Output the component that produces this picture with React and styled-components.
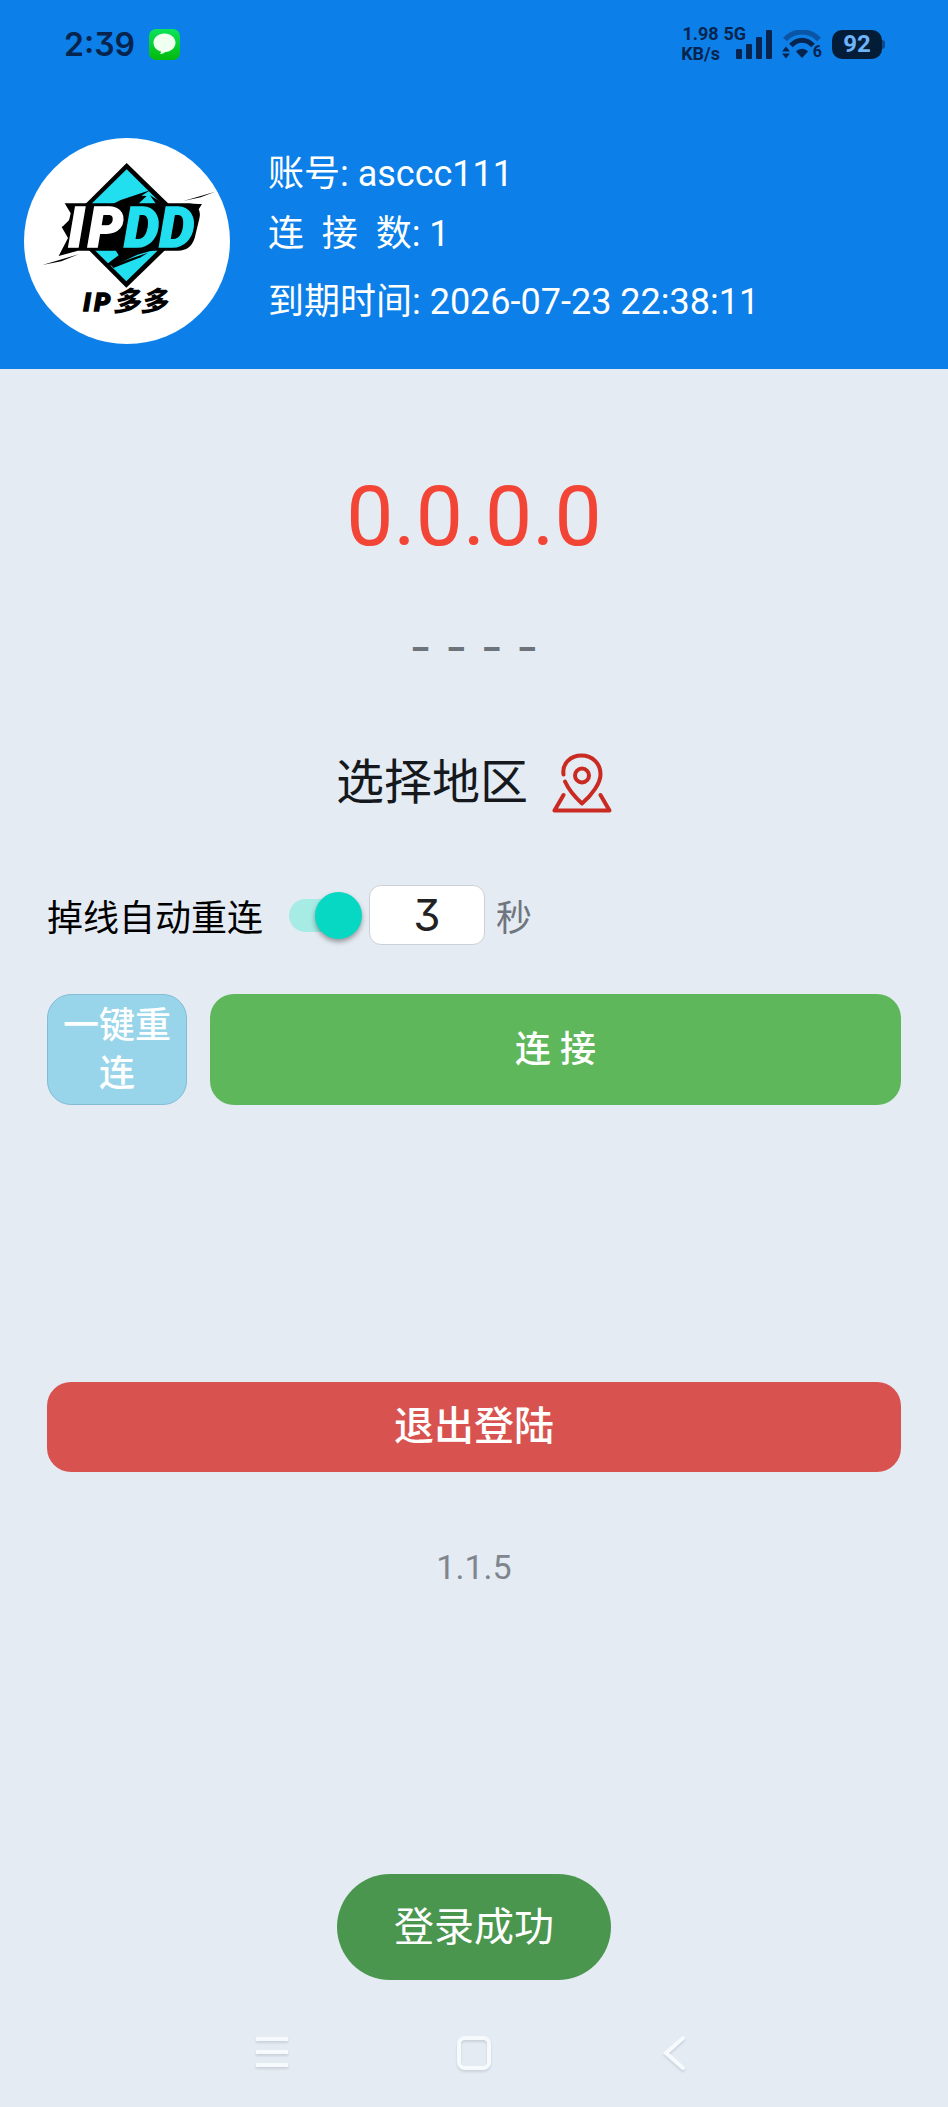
import React, { useState } from "react";
import styled, { createGlobalStyle } from "styled-components";

// Home screen of the client: account header, current IP, region picker and connection controls.

const App = () => {
  const [autoReconnect, setAutoReconnect] = useState(true);
  const [seconds, setSeconds] = useState("3");

  return (
    <Screen>
      <GlobalStyle />
      <Header>
        <StatusBar>
          <Clock>2:39</Clock>
          <MessageIcon />
          <StatusRight>
            <Traffic>
              1.98
              <br />
              KB/s
            </Traffic>
            <Signal>
              <Network>5G</Network>
              <SignalIcon />
            </Signal>
            <WifiIcon />
            <Battery>92</Battery>
          </StatusRight>
        </StatusBar>
        <Profile>
          <Logo />
          <Account>
            <AccountLine>账号: asccc111</AccountLine>
            <AccountLine>{"连  接  数: 1"}</AccountLine>
            <ExpiryLine>到期时间: 2026-07-23 22:38:11</ExpiryLine>
          </Account>
        </Profile>
      </Header>

      <Main>
        <IpAddress>0.0.0.0</IpAddress>
        <Location>- - - -</Location>
        <RegionButton type="button">
          选择地区
          <PinIcon />
        </RegionButton>

        <ReconnectRow>
          <label htmlFor="auto-reconnect">掉线自动重连</label>
          <Switch
            id="auto-reconnect"
            type="checkbox"
            role="switch"
            checked={autoReconnect}
            onChange={(e) => setAutoReconnect(e.target.checked)}
          />
          <SecondsInput
            id="seconds"
            inputMode="numeric"
            value={seconds}
            onChange={(e) => setSeconds(e.target.value)}
          />
          <Unit htmlFor="seconds">秒</Unit>
        </ReconnectRow>

        <Actions>
          <ReconnectButton type="button">一键重连</ReconnectButton>
          <ConnectButton type="button">连 接</ConnectButton>
        </Actions>

        <LogoutButton type="button">退出登陆</LogoutButton>
        <Version>1.1.5</Version>
      </Main>

      <Toast role="status">登录成功</Toast>

      <NavBar>
        <NavButton type="button" aria-label="Menu">
          <svg width="36" height="36" viewBox="0 0 36 36">
            <path d="M2 4h32M2 17h32M2 30h32" />
          </svg>
        </NavButton>
        <NavButton type="button" aria-label="Home">
          <svg width="36" height="36" viewBox="0 0 36 36">
            <rect x="3" y="3" width="30" height="30" rx="6" />
          </svg>
        </NavButton>
        <NavButton type="button" aria-label="Back">
          <svg width="36" height="36" viewBox="0 0 36 36">
            <path d="M25 3L8 18L25 33" strokeLinecap="round" />
          </svg>
        </NavButton>
      </NavBar>
    </Screen>
  );
};

const MessageIcon = () => (
  <svg width="31" height="31" viewBox="0 0 31 31">
    <defs>
      <linearGradient id="msg" x1="0" y1="0" x2="0" y2="1">
        <stop offset="0" stopColor="#0be35a" />
        <stop offset="1" stopColor="#04b90c" />
      </linearGradient>
    </defs>
    <rect width="31" height="31" rx="7" fill="url(#msg)" />
    <path
      d="M15.500 4.500c6.200 0 11 4 11 9.200s-4.800 9-10 9.300c-1.500 1.300-3.500 2-5.500 2 .8-.8 1.100-1.700 1-2.600C7.500 21.300 4.500 18 4.500 13.700c0-5.200 4.800-9.200 11-9.200z"
      fill="#effff0"
    />
  </svg>
);

const SignalIcon = () => (
  <svg width="36" height="29" viewBox="0 0 36 29" fill="#06244d">
    <rect x="0" y="19" width="6" height="10" rx="1" />
    <rect x="10" y="14" width="6" height="15" rx="1" />
    <rect x="20" y="7" width="6" height="22" rx="1" />
    <rect x="30" y="0" width="6" height="29" rx="1" />
  </svg>
);

const WifiIcon = () => (
  <Wifi>
    <svg width="40" height="29" viewBox="0 0 40 29" fill="none">
      <path d="M3 9.500C12-.5 28-.5 37 9.500" stroke="#0a55a5" strokeWidth="5" />
      <path d="M9 15.500c6.500-7 15.500-7 22 0" stroke="#06244d" strokeWidth="5" />
      <path d="M14 21.500c3.500-3.600 8.500-3.600 12 0L20 28z" fill="#06244d" />
      <path d="M0 21.500L4 16.500L8 21.500zM0 23.500h8L4 28.500z" fill="#06244d" />
    </svg>
    <WifiBand>6</WifiBand>
  </Wifi>
);

const PinIcon = () => (
  <svg
    width="60"
    height="60"
    viewBox="0 0 60 60"
    fill="none"
    stroke="#c92a22"
    strokeWidth="4"
    strokeLinecap="round"
    strokeLinejoin="round"
  >
    <path d="M11.500 21.500C10 10.500 18.500 2.500 29.500 2.500S48.500 10.500 48.500 21.500C48.500 30 40 42 30 50.500C24 45 17 37.500 13 28.500" />
    <circle cx="30" cy="22.500" r="7" />
    <path d="M11.500 42L2.500 57.500H57.500L48.500 42" />
  </svg>
);

const Logo = () => (
  <LogoSvg viewBox="0 0 618 618" role="img" aria-label="IP多多">
    <circle cx="309" cy="309" r="309" fill="#fff" />
    <path d="M308 75L500 262L307 449L120 262z" fill="#000" />
    <path d="M308 94L478 262L307 430L137 262z" fill="#22dff0" />
    <path d="M290 186L380 156L352 173L368 174L340 200H262z" fill="#000" />
    <path d="M396 198L378 172L424 200z" fill="#000" />
    <path d="M274 336H390L340 350L268 384L246 380L284 352z" fill="#000" />
    <path d="M262 382L372 344L350 358L268 390z" fill="#000" />
    <path
      d="M122 196H496Q514 199 534 198L524 214Q530 226 526 242L512 300Q500 338 462 338H162L104 354L132 300L113 267L134 252L140 226z"
      fill="#000"
    />
    <path d="M478 189L574 161L530 178zM55 381L164 349L112 370z" fill="#000" />
    <LogoText x="132" y="327" fontSize="168" fill="#fff" stroke="#fff">
      I
    </LogoText>
    <LogoText x="191" y="327" fontSize="168" fill="#fff" stroke="#fff">
      P
    </LogoText>
    <LogoText x="300" y="327" fontSize="168" fill="#22dff0" stroke="#22dff0">
      D
    </LogoText>
    <LogoText x="406" y="327" fontSize="168" fill="#22dff0" stroke="#22dff0">
      D
    </LogoText>
    <LogoText x="178" y="520" fontSize="76" fill="#000" stroke="#000">
      I
    </LogoText>
    <LogoText x="211" y="520" fontSize="76" fill="#000" stroke="#000">
      P
    </LogoText>
    <LogoText x="266" y="519" fontSize="82" fill="#000">
      多多
    </LogoText>
  </LogoSvg>
);

const GlobalStyle = createGlobalStyle`
  * {
    box-sizing: border-box;
  }

  body {
    margin: 0;
    background-color: #e4ebf3;
    font-family: Roboto, "Noto Sans CJK SC", sans-serif;
  }

  button,
  input {
    font-family: inherit;
  }
`;

const Screen = styled.div`
  position: relative;
  display: flex;
  flex-direction: column;
  min-height: 100vh;
  font-size: 36px;
`;

const Header = styled.header`
  background-color: #0c7fe9;
`;

const StatusBar = styled.div`
  display: flex;
  align-items: center;
  gap: 14px;
  height: 88px;
  padding: 0 66px 0 64px;
  color: #06244d;
`;

const Clock = styled.span`
  font-family: Inter, sans-serif;
  font-size: 32px;
  font-weight: 600;
  font-feature-settings: "cv09";
`;

const StatusRight = styled.div`
  display: flex;
  align-items: center;
  gap: 10px;
  margin-left: auto;
`;

const Traffic = styled.span`
  font-size: 18px;
  font-weight: 700;
  line-height: 20px;
  text-align: center;
`;

const Signal = styled.div`
  position: relative;
  display: flex;
  margin-left: 6px;
`;

const Network = styled.span`
  position: absolute;
  top: -6px;
  right: 26px;
  font-size: 18px;
  font-weight: 700;
  line-height: 20px;
`;

const Wifi = styled.div`
  position: relative;
  display: flex;
`;

const WifiBand = styled.span`
  position: absolute;
  right: 0;
  bottom: -2px;
  font-size: 16px;
  font-weight: 700;
  line-height: 18px;
`;

const Battery = styled.span`
  position: relative;
  width: 50px;
  border-radius: 10px;
  background-color: #031d38;
  color: #6fb4fb;
  font-size: 24px;
  font-weight: 700;
  line-height: 29px;
  text-align: center;

  &::after {
    content: "";
    position: absolute;
    top: 10px;
    left: 50px;
    width: 3px;
    height: 9px;
    border-radius: 0 3px 3px 0;
    background-color: #0a4a93;
  }
`;

const Profile = styled.div`
  display: flex;
  align-items: center;
  gap: 38px;
  padding: 50px 24px 25px;
`;

const LogoSvg = styled.svg`
  flex: none;
  width: 206px;
  height: 206px;
`;

const LogoText = styled.text`
  font-weight: 900;
  font-style: italic;
  stroke-width: 4px;
`;

const Account = styled.div`
  padding-bottom: 6px;
  color: #fff;
`;

const AccountLine = styled.p`
  margin: 0 0 8px;
  line-height: 52px;
  white-space: pre-wrap;
`;

const ExpiryLine = styled(AccountLine)`
  margin: 16px 0 0;
`;

const Main = styled.main`
  display: flex;
  flex: 1;
  flex-direction: column;
  padding: 98px 47px 0;
`;

const IpAddress = styled.h1`
  margin: 0;
  color: #f24536;
  font-size: 84px;
  font-weight: 400;
  line-height: 100px;
  text-align: center;
`;

const Location = styled.p`
  margin: 48px 0 0;
  color: #6c737b;
  font-family: Inter, sans-serif;
  font-size: 48px;
  line-height: 64px;
  text-align: center;
`;

const RegionButton = styled.button`
  display: flex;
  align-items: center;
  align-self: center;
  gap: 24px;
  margin-top: 72px;
  padding: 0;
  border: none;
  background: none;
  color: #15191d;
  font-size: 48px;
  line-height: 64px;
`;

const ReconnectRow = styled.div`
  display: flex;
  align-items: center;
  margin-top: 70px;
  color: #000;
`;

const Switch = styled.input`
  position: relative;
  appearance: none;
  width: 62px;
  height: 33px;
  margin: 0 18px 0 26px;
  border-radius: 17px;
  background-color: ${({ checked }) => (checked ? "#a6ebe4" : "#c3c9d0")};

  &::before {
    content: "";
    position: absolute;
    top: -7px;
    left: ${({ checked }) => (checked ? "26px" : "-11px")};
    width: 47px;
    height: 47px;
    border-radius: 50%;
    background-color: ${({ checked }) => (checked ? "#06d8c3" : "#f4f4f4")};
    box-shadow: 0 3px 5px rgba(0, 0, 0, 0.35);
  }
`;

const SecondsInput = styled.input`
  width: 116px;
  height: 60px;
  padding: 0;
  border: 1px solid #cdd0d4;
  border-radius: 12px;
  background-color: #fff;
  color: #222;
  font-family: Inter, sans-serif;
  font-size: 44px;
  font-feature-settings: "cv09";
  text-align: center;
`;

const Unit = styled.label`
  margin-left: 11px;
  color: #70767e;
`;

const Actions = styled.div`
  display: flex;
  gap: 23px;
  margin-top: 49px;
`;

const Button = styled.button`
  border: none;
  border-radius: 24px;
  color: #fff;
  font-size: 36px;
  font-weight: 500;
  line-height: 48px;
`;

const ReconnectButton = styled(Button)`
  width: 140px;
  height: 111px;
  padding: 0 8px;
  border: 1px solid #84bcd6;
  background-color: #98d5ea;
`;

const ConnectButton = styled(Button)`
  flex: 1;
  background-color: #5fb75c;
`;

const LogoutButton = styled(Button)`
  height: 90px;
  margin-top: 277px;
  background-color: #d8534f;
  font-size: 40px;
`;

const Version = styled.p`
  margin: 71px 0 0;
  color: #7f868d;
  font-size: 34px;
  line-height: 48px;
  text-align: center;
`;

const Toast = styled.div`
  position: absolute;
  bottom: 127px;
  left: 50%;
  padding: 2px 57px 0;
  border-radius: 53px;
  background-color: #4a964f;
  color: #fff;
  font-size: 40px;
  line-height: 104px;
  white-space: nowrap;
  transform: translateX(-50%);
`;

const NavBar = styled.nav`
  display: flex;
  align-items: center;
  justify-content: center;
  gap: 166px;
  height: 108px;
`;

const NavButton = styled.button`
  display: flex;
  padding: 0;
  border: none;
  background: none;

  svg {
    fill: none;
    stroke: #f7fafd;
    stroke-width: 4px;
    filter: drop-shadow(0 2px 1px rgba(60, 70, 80, 0.15));
  }
`;

export default App;
